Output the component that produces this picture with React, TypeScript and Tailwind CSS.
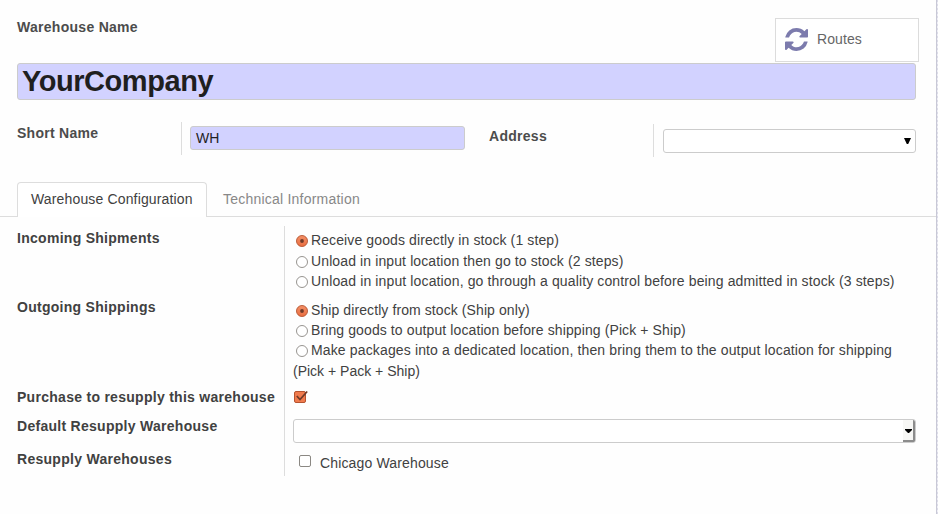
import type { ReactNode } from "react";

function Radio({ checked = false }: { checked?: boolean }) {
  return (
    <svg className="mt-[5px] block shrink-0" width="12" height="12" viewBox="0 0 12 12">
      <defs>
        <linearGradient id="orb" x1="0" y1="0" x2="0" y2="1">
          <stop offset="0" stopColor="#f39068" />
          <stop offset="1" stopColor="#ea6e40" />
        </linearGradient>
      </defs>
      <circle cx="6" cy="6" r="5.5" fill={checked ? "url(#orb)" : "#fff"} stroke={checked ? "#b5532f" : "#8b8883"} strokeWidth="0.9" />
      {checked && <circle cx="6" cy="6" r="1.9" fill="#6f3a28" />}
    </svg>
  );
}

function Option({ checked, className, children }: { checked?: boolean; className: string; children: ReactNode }) {
  return (
    <div className="flex h-5 whitespace-nowrap pl-[3px]">
      <Radio checked={checked} />
      <span className={"ml-[3px] " + className}>{children}</span>
    </div>
  );
}

function Label({ className, children }: { className: string; children: ReactNode }) {
  return <div className={"h-5 shrink-0 whitespace-nowrap font-bold tracking-[0.28px] " + className}>{children}</div>;
}

export default function App() {
  return (
    <div className="flex h-[514px] w-[938px] overflow-hidden bg-[#fefefe] font-['Liberation_Sans',Arial,sans-serif] text-[14px] leading-5 text-[#414141]">
      <main className="flex w-[936px] shrink-0 flex-col">
        <header className="flex h-[63px] justify-between pl-[17px] pr-[17px]">
          <Label className="pt-[17px] text-[#4c4c4c]">Warehouse Name</Label>
          <button className="mt-[18px] flex h-11 w-36 items-center border border-[#dcdcdc] bg-white pl-[9px] text-[#666]">
            <svg className="-mt-px" width="23" height="23" viewBox="0 0 1536 1536" fill="#7c7bad">
              <path d="M1511 928q0 5-1 7-64 268-268 434.5t-478 166.5q-146 0-282.5-55t-243.5-157l-129 129q-19 19-45 19t-45-19-19-45v-448q0-26 19-45t45-19h448q26 0 45 19t19 45-19 45l-137 137q71 66 161 102t187 36q134 0 250-65t186-179q11-17 53-117 8-23 30-23h192q13 0 22.5 9.5t9.5 22.5zm25-800v448q0 26-19 45t-45 19h-448q-26 0-45-19t-19-45 19-45l138-138q-148-137-349-137-134 0-250 65t-186 179q-11 17-53 117-8 23-30 23h-199q-13 0-22.5-9.5t-9.5-22.5v-7q65-268 270-434.5t480-166.5q146 0 284 55.5t245 156.5l130-129q19-19 45-19t45 19 19 45z" />
            </svg>
            <span className="-mt-[2px] ml-[9px] tracking-[0.1px]">Routes</span>
          </button>
        </header>
        <div className="ml-[17px] flex h-[37px] w-[899px] items-center rounded-[3px] border border-[#ccc] bg-[#d2d2ff] pb-[2px] pl-[4px] text-[29px] font-bold tracking-[-0.45px] text-[#1f1f1f]">
          YourCompany
        </div>
        <section className="mt-[22px] flex h-9 pl-[17px] text-[#4c4c4c]">
          <Label className="w-[164px] pt-[1px]">Short Name</Label>
          <div className="h-[33px] w-px bg-[#ddd]" />
          <div className="ml-2 mt-1 flex h-6 w-[275px] items-center rounded-[3px] border border-[#ccc] bg-[#d2d2ff] pl-[5px] text-[#1f1f1f]">WH</div>
          <Label className="ml-6 w-[164px] pt-[4px]">Address</Label>
          <div className="mt-[2px] h-[33px] w-px bg-[#ddd]" />
          <div className="ml-[9px] mt-[7px] flex h-6 w-[253px] items-center justify-end rounded-[3px] border border-[#ccc] bg-white pr-[4px]">
            <svg width="7" height="6" viewBox="0 0 7 6"><path d="M0 0h7L4.2 6H2.8z" fill="#000" /></svg>
          </div>
        </section>
        <nav className="mt-6 flex h-[35px]">
          <div className="w-[17px] border-b border-[#ddd]" />
          <div className="w-[190px] whitespace-nowrap rounded-t border border-b-0 border-[#ddd] bg-white pl-[13px] pt-[6px] tracking-[0.15px]">Warehouse Configuration</div>
          <div className="grow border-b border-[#ddd] pl-4 pt-[7px] tracking-[0.22px] text-[#888]">Technical Information</div>
        </nav>
        <section className="mt-[9px] flex pl-[17px]">
          <div className="flex h-[250px] w-[268px] flex-col border-r border-[#ddd]">
            <Label className="mt-[2px]">Incoming Shipments</Label>
            <Label className="mt-[49px]">Outgoing Shippings</Label>
            <Label className="mt-[70px]">Purchase to resupply this warehouse</Label>
            <Label className="mt-[9px]">Default Resupply Warehouse</Label>
            <Label className="mt-[13px]">Resupply Warehouses</Label>
          </div>
          <div className="ml-2 flex w-[623px] flex-col">
            <div className="mt-[4px]">
              <Option checked className="tracking-[0.11px]">Receive goods directly in stock (1 step)</Option>
              <div className="h-px" />
              <Option className="tracking-[0.115px]">Unload in input location then go to stock (2 steps)</Option>
              <Option className="tracking-[0.13px]">Unload in input location, go through a quality control before being admitted in stock (3 steps)</Option>
            </div>
            <div className="mt-[9px]">
              <Option checked className="tracking-[0.09px]">Ship directly from stock (Ship only)</Option>
              <Option className="tracking-[0.105px]">Bring goods to output location before shipping (Pick + Ship)</Option>
              <Option className="tracking-[0.14px]">Make packages into a dedicated location, then bring them to the output location for shipping</Option>
              <div className="mt-px h-5">(Pick + Pack + Ship)</div>
            </div>
            <svg className="ml-px mt-[9px] block" width="15" height="14" viewBox="0 0 15 14">
              <rect x=".5" y="1.5" width="11" height="11" rx="1.5" fill="#f07b4e" stroke="#b5532f" />
              <path d="M2.8 6l3.2 3.5L13.2 1.5" fill="none" stroke="#6f3a28" strokeWidth="1.7" />
            </svg>
            <div className="mt-[15px] flex h-6 w-[623px] justify-end overflow-hidden rounded-[3px] border border-[#ccc] bg-white">
              <div className="flex w-[12px] items-center justify-center border-b-2 border-r-2 border-[#8c8c8c] bg-[#f7f7f5] pt-px">
                <svg className="ml-px" width="7" height="4" viewBox="0 0 7 4"><path d="M0 0h7v1L4 4H3L0 1z" fill="#000" /></svg>
              </div>
            </div>
            <div className="mt-[10px] flex h-5 items-center">
              <div className="-mt-[4px] ml-[6px] h-3 w-3 rounded-[2px] border border-[#8b8883] bg-white" />
              <span className="ml-[9px] tracking-[0.15px]">Chicago Warehouse</span>
            </div>
          </div>
        </section>
      </main>
      <div className="h-full w-[2px] shrink-0 border-l border-[#c8c8d6] bg-[repeating-linear-gradient(#dcdce8_0_2px,#f0f0f6_2px_4px)]" />
    </div>
  );
}
